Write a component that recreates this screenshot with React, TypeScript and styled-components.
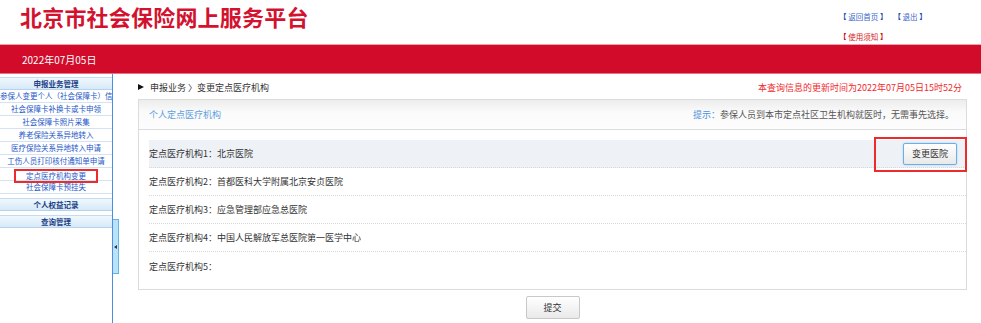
import React from "react";
import styled, { createGlobalStyle } from "styled-components";

const Global = createGlobalStyle`
  html, body { margin: 0; padding: 0; background: #fff; }
  body { font-family: "Noto Sans CJK SC", "Liberation Sans", sans-serif; width: 981px; height: 323px; overflow: hidden; }
  * { box-sizing: border-box; }
`;

const Page = styled.div`
  width: 981px;
  height: 323px;
  display: flex;
  flex-direction: column;
  overflow: hidden;
`;

const Header = styled.header`
  height: 44px;
  display: flex;
  align-items: flex-start;
  background: #fff;
`;

const Title = styled.h1`
  margin: 0;
  padding-left: 20px;
  font-size: 22px;
  line-height: 32px;
  font-weight: 700;
  color: #d3122f;
  letter-spacing: 0.2px;
`;

const TopLinks = styled.div`
  margin-left: auto;
  width: 142px;
  padding-top: 6px;
  display: flex;
  flex-direction: column;
`;

const LinkRow = styled.div`
  display: flex;
  gap: 6px;
  height: 20px;
  align-items: center;
`;

const TopLink = styled.a<{ $red?: boolean }>`
  font-size: 7.5px;
  color: ${(p) => (p.$red ? "#d42020" : "#3a66c8")};
  text-decoration: none;
  white-space: pre;
  & b {
    font-weight: 700;
    color: ${(p) => (p.$red ? "#d01010" : "#1d4fb8")};
  }
`;

const RedBar = styled.div`
  height: 30px;
  background: #d20b2b;
  border-top: 1px solid #eaa4ae;
  border-bottom: 1px solid #e47586;
  display: flex;
  align-items: center;
  padding-left: 22px;
  color: #fff;
  font-size: 10px;
`;

const Body = styled.div`
  flex: 1;
  display: flex;
  min-height: 0;
`;

const Sidebar = styled.nav`
  width: 113px;
  border-right: 1px solid #4b8fe2;
  padding-top: 3px;
  display: flex;
  flex-direction: column;
  overflow: hidden;
`;

const SectionHeader = styled.div<{ $gap?: number }>`
  height: 13px;
  margin-top: ${(p) => p.$gap ?? 0}px;
  border-top: 1px solid #c3dcf1;
  border-bottom: 1px solid #b7d3ec;
  background: linear-gradient(#f1f8fe, #d6e9f8);
  font-size: 7.5px;
  font-weight: 700;
  color: #1c3f86;
  text-align: center;
  line-height: 11px;
`;

const MenuItem = styled.div<{ $marked?: boolean }>`
  height: 13px;
  border-bottom: 1px solid #d3e3f2;
  font-size: 7.5px;
  color: #2457c8;
  text-align: center;
  line-height: 12px;
  white-space: nowrap;
  overflow: ${(p) => (p.$marked ? "visible" : "hidden")};
  position: relative;
  z-index: ${(p) => (p.$marked ? 1 : 0)};
`;

const Marked = styled.span`
  display: inline-block;
  vertical-align: top;
  margin-top: 1px;
  border: 2px solid #ec2c2c;
  padding: 0 10px;
  line-height: 10px;
  height: 14px;
`;

const Splitter = styled.div`
  width: 6px;
  padding-top: 145px;
`;

const Handle = styled.div`
  width: 6px;
  height: 55px;
  background: #b8e3fa;
  border: 1px solid #64b4ea;
  border-left: none;
  display: flex;
  align-items: center;
  justify-content: center;
  &::after {
    content: "";
    border-top: 2px solid transparent;
    border-bottom: 2px solid transparent;
    border-right: 3px solid #334;
  }
`;

const Main = styled.main`
  flex: 1;
  padding: 6px 14px 0 19px;
  display: flex;
  flex-direction: column;
`;

const TopLine = styled.div`
  height: 14px;
  margin-bottom: 5px;
  display: flex;
  align-items: center;
  font-size: 9px;
`;

const Crumb = styled.div`
  display: flex;
  align-items: center;
  color: #333;
  gap: 5px;
  &::before {
    content: "";
    border-top: 3.5px solid transparent;
    border-bottom: 3.5px solid transparent;
    border-left: 6px solid #111;
    margin-right: 1px;
  }
`;

const UpdateTime = styled.div`
  margin-left: auto;
  padding-right: 5px;
  color: #f0282d;
`;

const Panel = styled.section`
  border: 1px solid #dcdcdc;
  background: #fff;
`;

const PanelHead = styled.div`
  height: 30px;
  border-bottom: 1px solid #dcdcdc;
  background: linear-gradient(#ececec, #fafafa 40%, #fdfdfd);
  display: flex;
  align-items: center;
  padding: 0 12px 0 10px;
  font-size: 9px;
`;

const PanelTitle = styled.div`
  color: #5e9ee0;
`;

const Tip = styled.div`
  margin-left: auto;
  color: #555;
  & b {
    font-weight: 400;
    color: #4a8fe0;
  }
`;

const PanelBody = styled.div`
  padding: 10px 0 9px 10px;
`;

const Row = styled.div<{ $shade?: boolean; $last?: boolean }>`
  height: 28px;
  display: flex;
  align-items: center;
  font-size: 9px;
  color: #333;
  background: ${(p) => (p.$shade ? "#eef1f6" : "transparent")};
  border-bottom: ${(p) => (p.$last ? "none" : "1px dotted #d8d8d8")};
`;

const ButtonSlot = styled.div`
  margin-left: auto;
  margin-right: 9px;
  position: relative;
  display: flex;
`;

const Annotation = styled.div`
  position: absolute;
  top: -6px;
  bottom: -7px;
  left: -29px;
  right: -10px;
  border: 2px solid #ec2c2c;
  pointer-events: none;
`;

const Btn = styled.button<{ $focus?: boolean }>`
  width: 54px;
  height: ${(p) => (p.$focus ? 22 : 23)}px;
  padding: 0;
  font-family: inherit;
  font-size: 9px;
  color: #333;
  background: linear-gradient(#ffffff, #e9e9e9);
  border: 1px solid ${(p) => (p.$focus ? "#6aaeea" : "#c8c8c8")};
  box-shadow: ${(p) => (p.$focus ? "0 0 2px #9cccf4" : "none")};
  border-radius: 2px;
  cursor: pointer;
`;

const Actions = styled.div`
  display: flex;
  justify-content: center;
  padding-top: 6px;
`;

const menu = [
  "参保人变更个人（社会保障卡）信息",
  "社会保障卡补换卡或卡申领",
  "社会保障卡照片采集",
  "养老保险关系异地转入",
  "医疗保险关系异地转入申请",
  "工伤人员打印核付通知单申请",
  "定点医疗机构变更",
  "社会保障卡预挂失",
];

const hospitals = [
  "北京医院",
  "首都医科大学附属北京安贞医院",
  "应急管理部应急总医院",
  "中国人民解放军总医院第一医学中心",
  "",
];

export default function App() {
  return (
    <Page>
      <Global />
      <Header>
        <Title>北京市社会保险网上服务平台</Title>
        <TopLinks>
          <LinkRow>
            <TopLink href="#"><b>【</b> 返回首页 <b>】</b></TopLink>
            <TopLink href="#"><b>【</b> 退出 <b>】</b></TopLink>
          </LinkRow>
          <LinkRow>
            <TopLink href="#" $red><b>【</b> 使用须知 <b>】</b></TopLink>
          </LinkRow>
        </TopLinks>
      </Header>
      <RedBar>2022年07月05日</RedBar>
      <Body>
        <Sidebar>
          <SectionHeader>申报业务管理</SectionHeader>
          {menu.map((m) => {
            const marked = m === "定点医疗机构变更";
            return (
              <MenuItem key={m} $marked={marked}>
                {marked ? <Marked>{m}</Marked> : m}
              </MenuItem>
            );
          })}
          <SectionHeader $gap={4}>个人权益记录</SectionHeader>
          <SectionHeader $gap={4}>查询管理</SectionHeader>
        </Sidebar>
        <Splitter>
          <Handle />
        </Splitter>
        <Main>
          <TopLine>
            <Crumb>申报业务 〉变更定点医疗机构</Crumb>
            <UpdateTime>本查询信息的更新时间为2022年07月05日15时52分</UpdateTime>
          </TopLine>
          <Panel>
            <PanelHead>
              <PanelTitle>个人定点医疗机构</PanelTitle>
              <Tip><b>提示：</b>参保人员到本市定点社区卫生机构就医时，无需事先选择。</Tip>
            </PanelHead>
            <PanelBody>
              {hospitals.map((h, i) => (
                <Row key={i} $shade={i === 0} $last={i === hospitals.length - 1}>
                  定点医疗机构{i + 1}：{h}
                  {i === 0 && (
                    <ButtonSlot>
                      <Btn $focus>变更医院</Btn>
                      <Annotation />
                    </ButtonSlot>
                  )}
                </Row>
              ))}
            </PanelBody>
          </Panel>
          <Actions>
            <Btn>提交</Btn>
          </Actions>
        </Main>
      </Body>
    </Page>
  );
}
